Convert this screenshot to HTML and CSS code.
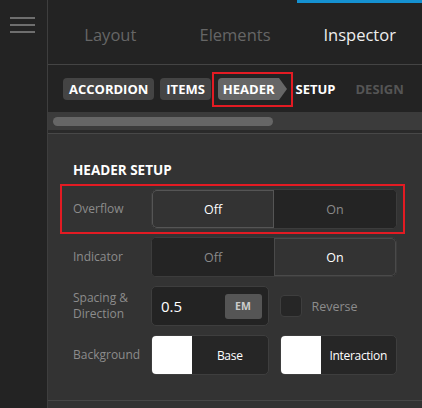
FILE: index.html
```html
<!DOCTYPE html>
<html lang="en">
<head>
  <meta charset="UTF-8" />
  <meta name="viewport" content="width=device-width, initial-scale=1.0" />
  <title>Inspector</title>
  <link rel="stylesheet" href="styles.css">
</head>
<body>
  <aside class="sidebar">
    <button class="menu" type="button" aria-label="Menu">
      <span></span><span></span><span></span>
    </button>
  </aside>

  <main class="painel">
    <nav class="abas">
      <a class="aba">Layout</a>
      <a class="aba">Elements</a>
      <a class="aba ativa">Inspector</a>
    </nav>

    <div class="trilha">
      <span class="pilula">ACCORDION</span>
      <span class="pilula">ITEMS</span>
      <span class="pilula atual">HEADER</span>
      <span class="passo">SETUP</span>
      <span class="passo apagado">DESIGN</span>
    </div>

    <div class="rolagem"><div class="polegar"></div></div>

    <section class="conteudo">
      <h3>HEADER SETUP</h3>

      <div class="linha destaque">
        <label class="rotulo">Overflow</label>
        <div class="segmento">
          <button class="opcao marcada">Off</button>
          <button class="opcao">On</button>
        </div>
      </div>

      <div class="linha">
        <label class="rotulo">Indicator</label>
        <div class="segmento">
          <button class="opcao">Off</button>
          <button class="opcao marcada">On</button>
        </div>
      </div>

      <div class="linha espaco">
        <label class="rotulo">Spacing &amp;<br>Direction</label>
        <div class="dupla">
          <div class="numero">
            <span class="valor">0.5</span>
            <button class="unidade">EM</button>
          </div>
          <label class="caixa"><span class="check"></span>Reverse</label>
        </div>
      </div>

      <div class="linha espaco">
        <label class="rotulo">Background</label>
        <div class="dupla">
          <button class="cor"><span class="amostra"></span><span class="nome">Base</span></button>
          <button class="cor"><span class="amostra"></span><span class="nome">Interaction</span></button>
        </div>
      </div>
    </section>

    <div class="rodape"></div>
  </main>
</body>
</html>
```

FILE: styles.css
```css
* {
  box-sizing: border-box;
}

body {
  margin: 0;
  height: 408px;
  display: flex;
  overflow: hidden;
  background: #333;
  font-family: 'Open Sans', 'Noto Sans', sans-serif;
  color: #eee;
}

button {
  font-family: inherit;
  border: none;
  padding: 0;
  cursor: pointer;
}

/* barra lateral */
.sidebar {
  width: 48px;
  flex-shrink: 0;
  background: #232323;
  border-right: 1px solid #3e3e3e;
}

.menu {
  display: flex;
  flex-direction: column;
  gap: 5px;
  margin: 17px 0 0 10px;
  background: none;
}

.menu span {
  display: block;
  width: 25px;
  height: 2px;
  background: #6e6e6e;
}

.painel {
  flex: 1;
  min-width: 0;
  display: flex;
  flex-direction: column;
}

/* abas do topo */
.abas {
  display: flex;
  height: 65px;
  background: #232323;
  border-bottom: 1px solid #444;
}

.aba {
  flex: 1;
  display: flex;
  justify-content: center;
  align-items: center;
  padding-top: 2px;
  font-size: 16.5px;
  color: #666;
  border-top: 3px solid transparent;
}

.aba.ativa {
  color: #eee;
  border-top-color: #1591d1;
}

/* trilha de navegação */
.trilha {
  display: flex;
  align-items: center;
  gap: 6px;
  height: 47px;
  padding-left: 15px;
  background: #232323;
  overflow: hidden;
  white-space: nowrap;
}

.pilula {
  height: 22px;
  line-height: 22px;
  padding: 0 6px;
  border-radius: 4px;
  background: #444;
  font-size: 13px;
  font-weight: 700;
  color: #fff;
}

.pilula.atual {
  position: relative;
  margin-left: 1px;
  margin-right: 8px;
  padding: 0 4px 0 5px;
  background: #666;
  border-radius: 4px 0 0 4px;
}

/* setinha do item atual */
.pilula.atual::after {
  content: '';
  position: absolute;
  right: -8px;
  top: 0;
  border-left: 8px solid #666;
  border-top: 11px solid transparent;
  border-bottom: 11px solid transparent;
}

/* moldura vermelha em volta do item atual */
.pilula.atual::before {
  content: '';
  position: absolute;
  left: -6px;
  right: -14px;
  top: -6px;
  bottom: -7px;
  border: 2px solid #e31b23;
}

.passo {
  margin-left: 3px;
  margin-right: 14px;
  font-size: 13px;
  font-weight: 700;
  color: #fff;
}

.passo.apagado {
  margin: 0;
  color: #555;
}

/* barra de rolagem horizontal */
.rolagem {
  height: 22px;
  padding: 5px 0 0 5px;
  background: #3b3b3b;
  border-bottom: 1px solid #484848;
  box-shadow: inset 0 -5px 0 -2px #2a2a2a;
}

.polegar {
  width: 220px;
  height: 9px;
  border-radius: 5px;
  background: #666;
}

/* conteúdo */
.conteudo {
  padding: 27px 25px 0 25px;
  display: flex;
  flex-direction: column;
  gap: 8px;
}

h3 {
  margin: 0 0 2px;
  font-size: 13.5px;
  font-weight: 700;
  color: #fff;
}

.linha {
  display: flex;
  align-items: center;
  min-height: 40px;
}

.linha.espaco {
  margin-top: 1px;
}

.linha.destaque {
  outline: 2px solid #e31b23;
  outline-offset: 3px;
  margin: 0 -3px 0 -8px;
  padding: 0 3px 0 8px;
}

.rotulo {
  width: 78px;
  flex-shrink: 0;
  font-size: 12px;
  line-height: 16px;
  color: #8c8c8c;
}

.segmento {
  flex: 1;
  display: flex;
  height: 40px;
  border-radius: 5px;
  overflow: hidden;
  border: 1px solid #3c3c3c;
  background: #242424;
}

.opcao {
  flex: 1;
  background: #242424;
  color: #8a8a8a;
  font-size: 12.5px;
}

.opcao.marcada {
  background: #333;
  color: #fff;
  box-shadow: inset 0 0 0 1px #555;
  border-radius: 5px 0 0 5px;
}

.opcao.marcada:last-child {
  border-radius: 0 5px 5px 0;
  box-shadow: inset 0 0 0 1px #4a4a4a;
}

.dupla {
  flex: 1;
  display: grid;
  grid-template-columns: 1fr 1fr;
  gap: 11px;
  align-items: center;
}

.numero {
  display: flex;
  align-items: center;
  justify-content: space-between;
  height: 40px;
  padding: 0 6px 0 9px;
  background: #232323;
  border: 1px solid #3e3e3e;
  border-radius: 5px;
}

.valor {
  font-size: 15px;
  color: #fff;
}

.unidade {
  width: 37px;
  height: 25px;
  border-radius: 3px;
  background: #555;
  color: #ccc;
  font-size: 10.5px;
  font-weight: 700;
}

.caixa {
  display: flex;
  align-items: center;
  gap: 10px;
  font-size: 12.5px;
  color: #8c8c8c;
}

.check {
  width: 22px;
  height: 22px;
  border-radius: 4px;
  background: #262626;
  border: 1px solid #3e3e3e;
}

.cor {
  display: flex;
  height: 40px;
  border-radius: 5px;
  background: #262626;
  border: 1px solid #3e3e3e;
  overflow: hidden;
}

.amostra {
  width: 40px;
  background: #fff;
}

.nome {
  flex: 1;
  align-self: center;
  font-size: 12px;
  letter-spacing: -0.3px;
  color: #fff;
}

.rodape {
  margin-top: auto;
  height: 8px;
  border-top: 1px solid #474747;
}
```
